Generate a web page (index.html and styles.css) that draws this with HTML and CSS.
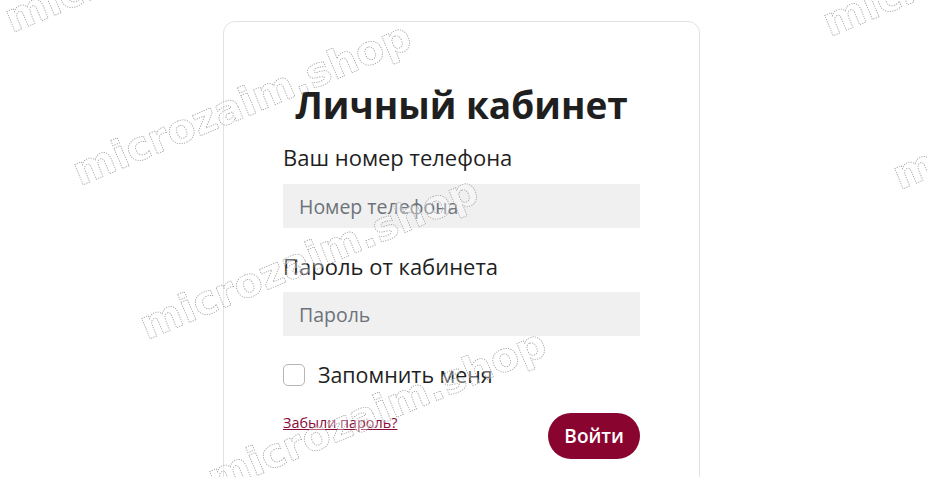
FILE: index.html
```html
<!DOCTYPE html>
<html lang="ru">
<head>
<meta charset="utf-8">
<title>Личный кабинет</title>
<link rel="stylesheet" href="styles.css">
</head>
<body>
<main class="card">
  <h1 class="title">Личный кабинет</h1>
  <form class="form">
    <label class="label label-first" for="phone">Ваш номер телефона</label>
    <input class="field" id="phone" type="text" placeholder="Номер телефона">
    <label class="label label-second" for="pass">Пароль от кабинета</label>
    <input class="field" id="pass" type="password" placeholder="Пароль">
    <div class="remember">
      <span class="check"></span>
      <span class="remember-text">Запомнить меня</span>
    </div>
    <div class="actions">
      <a class="forgot" href="#">Забыли пароль?</a>
      <button class="submit" type="button">Войти</button>
    </div>
  </form>
</main>
<svg class="watermark" width="927" height="477" viewBox="0 0 927 477" aria-hidden="true">
  <g class="wm">
    <text x="12" y="33" transform="rotate(-22.6 12 33)" textLength="362" lengthAdjust="spacingAndGlyphs">microzaim.shop</text>
    <text x="80" y="186" transform="rotate(-22.6 80 186)" textLength="362" lengthAdjust="spacingAndGlyphs">microzaim.shop</text>
    <text x="147" y="340" transform="rotate(-22.6 147 340)" textLength="362" lengthAdjust="spacingAndGlyphs">microzaim.shop</text>
    <text x="215" y="493" transform="rotate(-22.6 215 493)" textLength="362" lengthAdjust="spacingAndGlyphs">microzaim.shop</text>
    <text x="830" y="37" transform="rotate(-22.6 830 37)" textLength="362" lengthAdjust="spacingAndGlyphs">microzaim.shop</text>
    <text x="900" y="190" transform="rotate(-22.6 900 190)" textLength="362" lengthAdjust="spacingAndGlyphs">microzaim.shop</text>
  </g>
</svg>
</body>
</html>
```
FILE: styles.css
```css
* { box-sizing: border-box; }
html, body { margin: 0; padding: 0; background: #fff; }
body {
  font-family: "Open Sans", "Noto Sans", "Liberation Sans", sans-serif;
  color: #212529;
  overflow: hidden;
  height: 477px;
}
.card {
  width: 477px;
  height: 470px;
  margin: 21px 0 0 223px;
  padding: 59px 59px 0;
  border: 1px solid #e2e2e2;
  border-radius: 12px;
  background: #fff;
}
.title {
  margin: 0 -40px 14px;
  font-size: 37px;
  line-height: 48px;
  font-weight: 700;
  text-align: center;
  color: #1f1f1f;
}
.form { display: flex; flex-direction: column; }
.label {
  font-size: 22px;
  line-height: 28px;
  color: #1f1f1f;
}
.label-first { margin-bottom: 13px; }
.label-second { margin-top: 24px; margin-bottom: 12px; }
.field {
  height: 44px;
  width: 100%;
  border: 0;
  background: #f0f0f0;
  padding: 0 16px;
  font-family: inherit;
  font-size: 19.5px;
  color: #212529;
  outline: none;
}
.field::placeholder { color: #6c737a; }
.remember {
  display: flex;
  align-items: center;
  gap: 13px;
  margin-top: 27px;
}
.check {
  width: 22px;
  height: 22px;
  border: 1px solid #b5b5b5;
  border-radius: 5px;
  background: #fff;
}
.remember-text {
  font-size: 21.4px;
  line-height: 24px;
  color: #1f1f1f;
}
.actions {
  display: flex;
  justify-content: space-between;
  align-items: flex-start;
  margin-top: 26px;
}
.forgot {
  font-size: 14.4px;
  line-height: 20px;
  color: #8a0a3a;
  text-decoration: underline;
}
.submit {
  height: 46px;
  padding: 0 16px;
  border: 0;
  border-radius: 23px;
  background: #890530;
  color: #fff;
  font-family: inherit;
  font-size: 19px;
  font-weight: 600;
}
.watermark {
  position: fixed;
  left: 0;
  top: 0;
  pointer-events: none;
}
.wm text {
  font-family: "DejaVu Sans", sans-serif;
  font-weight: 700;
  font-size: 40px;
  fill: rgba(255, 255, 255, 0.35);
  stroke: #a0a0a0;
  stroke-width: 0.8;
  stroke-dasharray: 1.2 1.2;
}
```
